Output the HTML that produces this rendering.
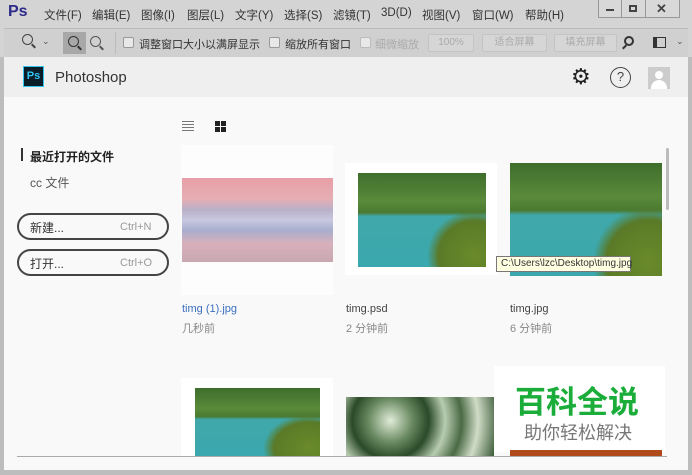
<!DOCTYPE html>
<html><head><meta charset="utf-8"><style>
*{margin:0;padding:0;box-sizing:border-box}
body{width:692px;height:475px;overflow:hidden;background:#d4d4d4;font-family:"Liberation Sans","Noto Sans CJK SC",sans-serif;position:relative}
.a{position:absolute}
.menu span{position:absolute;top:7px;font-size:11.5px;color:#333}
.tb{font-size:11px;color:#333;position:absolute;top:36px}
.btn{position:absolute;top:34px;height:18px;border:1px solid #c4c4c4;border-radius:2px;font-size:10px;color:#aaa;text-align:center;line-height:16px;background:#d6d6d6}
.cb{position:absolute;top:37px;width:11px;height:11px;border:1px solid #999;background:#e8e8e8;border-radius:2px}
.lake{background:linear-gradient(180deg,#3e6e2c 0%,#5a8a3a 30%,#4a7a30 42%,#40a8aa 46%,#3aa8ae 100%)}
.lake:after{content:"";position:absolute;right:0;bottom:0;width:45%;height:60%;background:radial-gradient(ellipse at 80% 80%,#6a8a2a 0%,#5a7a28 55%,rgba(90,120,40,0) 72%)}
.sm{font-size:11px;color:#888}
.lens{position:absolute;width:11px;height:11px;border:1.5px solid #444;border-radius:50%;background:transparent}
</style></head><body>
<div class="a" style="left:0;top:0;width:692px;height:28px;background:#d4d4d4"></div>
<div class="a" style="left:8px;top:3px;font-size:16px;font-weight:bold;color:#2e2a8a">Ps</div>
<div class="menu">
<span style="left:44px">文件(F)</span><span style="left:92px">编辑(E)</span><span style="left:141px">图像(I)</span><span style="left:187px">图层(L)</span><span style="left:235px">文字(Y)</span><span style="left:284px">选择(S)</span><span style="left:333px">滤镜(T)</span><span style="left:381px">3D(D)</span><span style="left:422px">视图(V)</span><span style="left:472px">窗口(W)</span><span style="left:525px">帮助(H)</span>
</div>
<div class="a" style="left:598px;top:0;width:82px;height:18px;border:1px solid #999;border-top:none;background:#d8d8d8"></div>
<div class="a" style="left:621px;top:0;width:1px;height:18px;background:#999"></div>
<div class="a" style="left:645px;top:0;width:1px;height:18px;background:#999"></div>
<div class="a" style="left:606px;top:9px;width:8px;height:2px;background:#444"></div>
<div class="a" style="left:629px;top:5px;width:8px;height:7px;border:2px solid #444"></div>
<div class="a" style="left:656px;top:1px;font-size:13px;font-weight:bold;color:#444">✕</div>
<div class="a" style="left:4px;top:28px;width:684px;height:29px;background:#d0d0d0;border-top:1px solid #bbb"></div>
<div class="lens" style="left:22px;top:34px"></div>
<div class="a" style="left:31px;top:45px;width:5px;height:2px;background:#444;transform:rotate(45deg)"></div>
<div class="a" style="left:42px;top:36px;font-size:9px;color:#555">⌄</div>
<div class="a" style="left:63px;top:32px;width:23px;height:22px;background:#a8a8a8"></div>
<div class="lens" style="left:68px;top:36px;border-color:#333"></div>
<div class="a" style="left:77px;top:47px;width:5px;height:2px;background:#333;transform:rotate(45deg)"></div>
<div class="lens" style="left:90px;top:36px;border-color:#555"></div>
<div class="a" style="left:99px;top:47px;width:5px;height:2px;background:#555;transform:rotate(45deg)"></div>
<div class="a" style="left:115px;top:32px;width:1px;height:22px;background:#bbb"></div>
<div class="cb" style="left:123px"></div><div class="tb" style="left:139px">调整窗口大小以满屏显示</div>
<div class="cb" style="left:269px"></div><div class="tb" style="left:285px">缩放所有窗口</div>
<div class="cb" style="left:360px;border-color:#bbb"></div><div class="tb" style="left:375px;color:#aaa">细微缩放</div>
<div class="btn" style="left:428px;width:46px">100%</div>
<div class="btn" style="left:482px;width:65px">适合屏幕</div>
<div class="btn" style="left:554px;width:63px">填充屏幕</div>
<div class="a" style="left:624px;top:36px;width:10px;height:10px;border:2px solid #333;border-radius:50%"></div>
<div class="a" style="left:622px;top:46px;width:5px;height:2px;background:#333;transform:rotate(-45deg)"></div>
<div class="a" style="left:653px;top:37px;width:13px;height:11px;border:1px solid #333;border-left:4px solid #333"></div>
<div class="a" style="left:676px;top:36px;font-size:9px;color:#555">⌄</div>
<div class="a" style="left:4px;top:57px;width:684px;height:413px;background:#f9f9f9"></div>
<div class="a" style="left:4px;top:57px;width:684px;height:40px;background:#efefef"></div>
<div class="a" style="left:23px;top:66px;width:21px;height:21px;background:#0c1d2a;border:1px solid #31c5f0;color:#31c5f0;font-size:11px;font-weight:bold;text-align:center;line-height:19px">Ps</div>
<div class="a" style="left:55px;top:69px;font-size:15px;color:#333">Photoshop</div>
<div class="a" style="left:571px;top:64px;font-size:22px;color:#222;line-height:26px">⚙</div>
<div class="a" style="left:610px;top:67px;width:21px;height:21px;border:1.5px solid #444;border-radius:50%;text-align:center;font-size:13px;line-height:18px;color:#444">?</div>
<div class="a" style="left:648px;top:67px;width:22px;height:22px;background:#ccc;overflow:hidden"><div class="a" style="left:7px;top:4px;width:8px;height:8px;border-radius:50%;background:#fff"></div><div class="a" style="left:3px;top:13px;width:16px;height:10px;border-radius:8px 8px 0 0;background:#fff"></div></div>
<div class="a" style="left:182px;top:121px;width:12px;height:10px;border-top:1px solid #777;border-bottom:1px solid #777"></div>
<div class="a" style="left:182px;top:124px;width:12px;height:4px;border-top:1px solid #777;border-bottom:1px solid #777"></div>
<div class="a" style="left:215px;top:121px;width:5px;height:5px;background:#222;box-shadow:6px 0 #222,0 6px #222,6px 6px #222"></div>
<div class="a" style="left:21px;top:148px;width:2px;height:13px;background:#333"></div>
<div class="a" style="left:30px;top:148px;font-size:12px;color:#222;font-weight:bold">最近打开的文件</div>
<div class="a" style="left:30px;top:174px;font-size:12px;color:#555">cc 文件</div>
<div class="a" style="left:17px;top:213px;width:152px;height:27px;border:2px solid #444;border-radius:14px"></div>
<div class="a" style="left:30px;top:219px;font-size:12px;color:#333">新建...</div>
<div class="a" style="left:120px;top:221px;font-size:11px;color:#999">Ctrl+N</div>
<div class="a" style="left:17px;top:249px;width:152px;height:27px;border:2px solid #444;border-radius:14px"></div>
<div class="a" style="left:30px;top:255px;font-size:12px;color:#333">打开...</div>
<div class="a" style="left:120px;top:257px;font-size:11px;color:#999">Ctrl+O</div>
<div class="a" style="left:181px;top:145px;width:152px;height:150px;background:#fdfdfd"></div>
<div class="a" style="left:182px;top:178px;width:151px;height:84px;background:linear-gradient(180deg,#e89ea6 0%,#e6aeb4 25%,#b8b0c8 38%,#c8c8e0 50%,#a8aece 62%,#d8b0bc 78%,#c8a8b0 100%)"></div>
<div class="a" style="left:345px;top:163px;width:152px;height:112px;background:#fff"></div>
<div class="a lake" style="left:358px;top:173px;width:128px;height:94px"></div>
<div class="a lake" style="left:510px;top:163px;width:152px;height:113px"></div>
<div class="a" style="left:496px;top:256px;width:135px;height:16px;background:#ffffe1;border:1px solid #777;font-size:10px;color:#333;line-height:14px;padding-left:4px">C:\Users\lzc\Desktop\timg.jpg</div>
<div class="a" style="left:182px;top:303px;font-size:11px;color:#3b6fc1">timg (1).jpg</div>
<div class="a sm" style="left:182px;top:320px">几秒前</div>
<div class="a" style="left:346px;top:303px;font-size:11px;color:#444">timg.psd</div>
<div class="a sm" style="left:346px;top:320px">2 分钟前</div>
<div class="a" style="left:510px;top:303px;font-size:11px;color:#444">timg.jpg</div>
<div class="a sm" style="left:510px;top:320px">6 分钟前</div>
<div class="a" style="left:666px;top:148px;width:3px;height:62px;background:#bbb;border-radius:2px"></div>
<div class="a" style="left:181px;top:378px;width:152px;height:78px;background:#fff"></div>
<div class="a lake" style="left:195px;top:388px;width:125px;height:68px"></div>
<div class="a" style="left:346px;top:397px;width:148px;height:59px;background:radial-gradient(circle at 30% 40%,#e0ecd8 0,#6a8a62 20%,#2a4a28 35%,#b8ccb0 50%,#4a6a44 65%,#d0dcc8 80%,#3a5a36 100%)"></div>
<div class="a" style="left:494px;top:366px;width:171px;height:86px;background:#fff"></div>
<div class="a" style="left:510px;top:450px;width:152px;height:6px;background:#b04a1a"></div>
<div class="a" style="left:515px;top:380px;font-size:31px;font-weight:bold;color:#1aad3a;font-family:'Noto Sans CJK SC',sans-serif;line-height:40px">百科全说</div>
<div class="a" style="left:524px;top:420px;font-size:18px;color:#777;font-family:'Noto Sans CJK SC',sans-serif;line-height:24px">助你轻松解决</div>
<div class="a" style="left:17px;top:456px;width:650px;height:1px;background:#aaa"></div>
<div class="a" style="left:0;top:57px;width:4px;height:418px;background:#bdbdbd"></div>
<div class="a" style="left:688px;top:57px;width:4px;height:418px;background:#bdbdbd"></div>
<div class="a" style="left:0;top:470px;width:692px;height:5px;background:#bdbdbd"></div>
</body></html>
